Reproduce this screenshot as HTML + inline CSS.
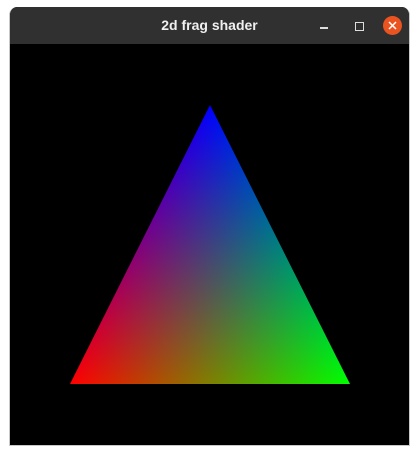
<!DOCTYPE html>
<html><head><style>
html,body{margin:0;padding:0;width:420px;height:455px;background:#fff;overflow:hidden}
.win{position:absolute;left:9px;top:7px;width:401px;height:439px;border:1px solid #c8c8c8;border-top:none;border-radius:8px 8px 0 0;background:#000;box-sizing:border-box;overflow:hidden}
.tb{position:absolute;left:0;top:0;width:100%;height:37px;background:#303030;border-radius:8px 8px 0 0;color:#f0f0f0;font:bold 14px "Liberation Sans",sans-serif}
.t{position:absolute;left:0;width:100%;text-align:center;top:10px}
svg.c{position:absolute;left:0;top:0}
</style></head><body>
<div class="win"><div class="tb"><div class="t">2d frag shader</div>
<div style="position:absolute;left:310px;top:20px;width:8px;height:1.5px;background:#ddd"></div>
<div style="position:absolute;left:345px;top:15px;width:7px;height:7px;border:1.3px solid #ddd"></div>
<div style="position:absolute;left:373px;top:9px;width:19px;height:19px;border-radius:50%;background:#e95420"></div>
<svg style="position:absolute;left:373px;top:9px" width="19" height="19"><path d="M6 6L13 13M13 6L6 13" stroke="#fff" stroke-width="1.5"/></svg>
</div></div>
<svg class="c" width="420" height="455">
<defs>
<linearGradient id="r" gradientUnits="userSpaceOnUse" x1="70" y1="384" x2="293.7" y2="271.8"><stop offset="0" stop-color="#f00"/><stop offset="1" stop-color="#000"/></linearGradient>
<linearGradient id="g" gradientUnits="userSpaceOnUse" x1="350" y1="384" x2="126.3" y2="271.8"><stop offset="0" stop-color="#0f0"/><stop offset="1" stop-color="#000"/></linearGradient>
<linearGradient id="b" gradientUnits="userSpaceOnUse" x1="210" y1="105" x2="210" y2="384"><stop offset="0" stop-color="#00f"/><stop offset="1" stop-color="#000"/></linearGradient>
</defs>
<g style="isolation:isolate">
<polygon points="210,105 350,384 70,384" fill="url(#r)"/>
<polygon points="210,105 350,384 70,384" fill="url(#g)" style="mix-blend-mode:screen"/>
<polygon points="210,105 350,384 70,384" fill="url(#b)" style="mix-blend-mode:screen"/>
</g>
</svg>
</body></html>
